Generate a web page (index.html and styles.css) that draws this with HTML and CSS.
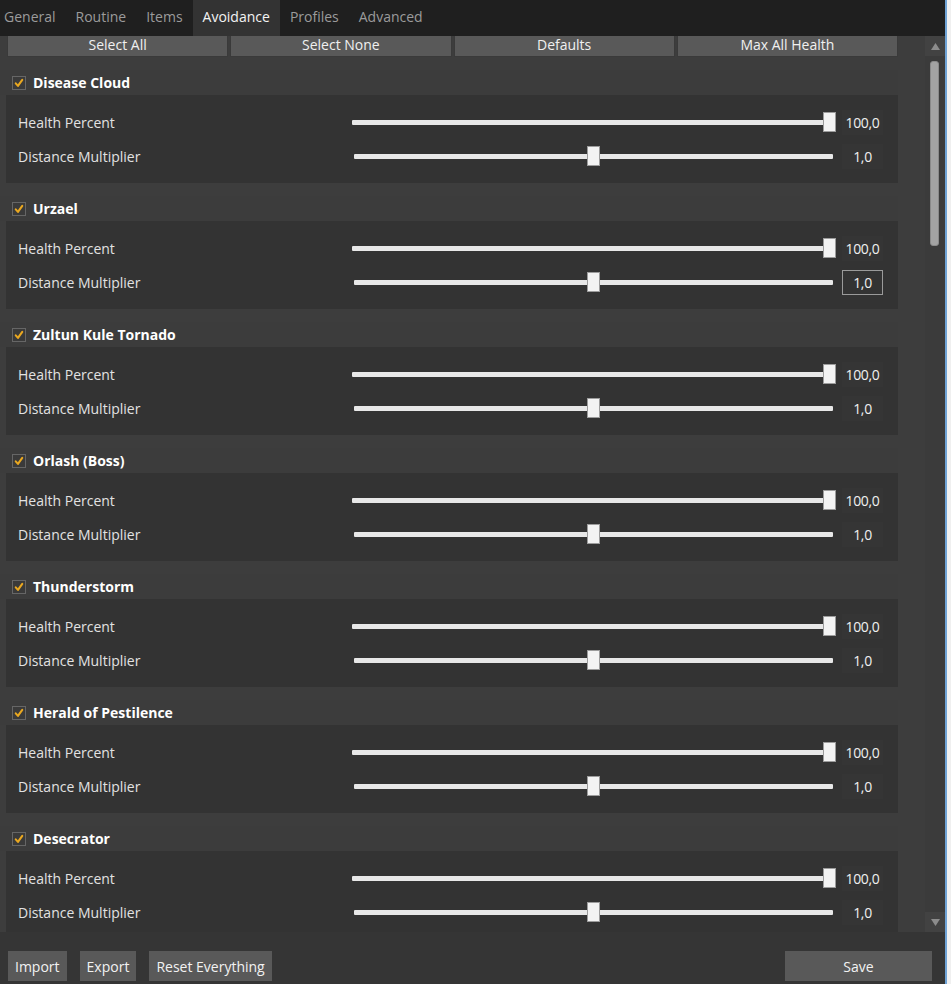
FILE: index.html
```html
<!DOCTYPE html>
<html>
<head>
<meta charset="utf-8">
<link rel="stylesheet" href="styles.css">
</head>
<body>
<div class="window">
  <nav class="tabs">
    <div class="tab">General</div>
    <div class="tab">Routine</div>
    <div class="tab">Items</div>
    <div class="tab active">Avoidance</div>
    <div class="tab">Profiles</div>
    <div class="tab">Advanced</div>
  </nav>
  <div class="main">
    <div class="content">
      <div class="toolbar">
        <button class="tbtn">Select All</button>
        <button class="tbtn">Select None</button>
        <button class="tbtn">Defaults</button>
        <button class="tbtn">Max All Health</button>
      </div>

      <section class="group">
        <div class="ghead"><span class="cb"><svg viewBox="0 0 14 14"><path d="M3.2 7.4 L5.8 10.4 L10.8 3.4" /></svg></span><span class="gtitle">Disease Cloud</span></div>
        <div class="gbody">
          <div class="row"><span class="label">Health Percent</span><div class="slider s-h"><div class="track"></div><div class="thumb" style="left:477px"></div></div><span class="val">100,0</span></div>
          <div class="row"><span class="label">Distance Multiplier</span><div class="slider s-d"><div class="track"></div><div class="thumb" style="left:241px"></div></div><span class="val">1,0</span></div>
        </div>
      </section>

      <section class="group">
        <div class="ghead"><span class="cb"><svg viewBox="0 0 14 14"><path d="M3.2 7.4 L5.8 10.4 L10.8 3.4" /></svg></span><span class="gtitle">Urzael</span></div>
        <div class="gbody">
          <div class="row"><span class="label">Health Percent</span><div class="slider s-h"><div class="track"></div><div class="thumb" style="left:477px"></div></div><span class="val">100,0</span></div>
          <div class="row"><span class="label">Distance Multiplier</span><div class="slider s-d"><div class="track"></div><div class="thumb" style="left:241px"></div></div><span class="val focus">1,0</span></div>
        </div>
      </section>

      <section class="group">
        <div class="ghead"><span class="cb"><svg viewBox="0 0 14 14"><path d="M3.2 7.4 L5.8 10.4 L10.8 3.4" /></svg></span><span class="gtitle">Zultun Kule Tornado</span></div>
        <div class="gbody">
          <div class="row"><span class="label">Health Percent</span><div class="slider s-h"><div class="track"></div><div class="thumb" style="left:477px"></div></div><span class="val">100,0</span></div>
          <div class="row"><span class="label">Distance Multiplier</span><div class="slider s-d"><div class="track"></div><div class="thumb" style="left:241px"></div></div><span class="val">1,0</span></div>
        </div>
      </section>

      <section class="group">
        <div class="ghead"><span class="cb"><svg viewBox="0 0 14 14"><path d="M3.2 7.4 L5.8 10.4 L10.8 3.4" /></svg></span><span class="gtitle">Orlash (Boss)</span></div>
        <div class="gbody">
          <div class="row"><span class="label">Health Percent</span><div class="slider s-h"><div class="track"></div><div class="thumb" style="left:477px"></div></div><span class="val">100,0</span></div>
          <div class="row"><span class="label">Distance Multiplier</span><div class="slider s-d"><div class="track"></div><div class="thumb" style="left:241px"></div></div><span class="val">1,0</span></div>
        </div>
      </section>

      <section class="group">
        <div class="ghead"><span class="cb"><svg viewBox="0 0 14 14"><path d="M3.2 7.4 L5.8 10.4 L10.8 3.4" /></svg></span><span class="gtitle">Thunderstorm</span></div>
        <div class="gbody">
          <div class="row"><span class="label">Health Percent</span><div class="slider s-h"><div class="track"></div><div class="thumb" style="left:477px"></div></div><span class="val">100,0</span></div>
          <div class="row"><span class="label">Distance Multiplier</span><div class="slider s-d"><div class="track"></div><div class="thumb" style="left:241px"></div></div><span class="val">1,0</span></div>
        </div>
      </section>

      <section class="group">
        <div class="ghead"><span class="cb"><svg viewBox="0 0 14 14"><path d="M3.2 7.4 L5.8 10.4 L10.8 3.4" /></svg></span><span class="gtitle">Herald of Pestilence</span></div>
        <div class="gbody">
          <div class="row"><span class="label">Health Percent</span><div class="slider s-h"><div class="track"></div><div class="thumb" style="left:477px"></div></div><span class="val">100,0</span></div>
          <div class="row"><span class="label">Distance Multiplier</span><div class="slider s-d"><div class="track"></div><div class="thumb" style="left:241px"></div></div><span class="val">1,0</span></div>
        </div>
      </section>

      <section class="group">
        <div class="ghead"><span class="cb"><svg viewBox="0 0 14 14"><path d="M3.2 7.4 L5.8 10.4 L10.8 3.4" /></svg></span><span class="gtitle">Desecrator</span></div>
        <div class="gbody">
          <div class="row"><span class="label">Health Percent</span><div class="slider s-h"><div class="track"></div><div class="thumb" style="left:477px"></div></div><span class="val">100,0</span></div>
          <div class="row"><span class="label">Distance Multiplier</span><div class="slider s-d"><div class="track"></div><div class="thumb" style="left:241px"></div></div><span class="val">1,0</span></div>
        </div>
      </section>
    </div>
    <div class="scrollbar">
      <div class="sarrow"><svg viewBox="0 0 12 10"><path d="M1 9 L6 1 L11 9 Z"/></svg></div>
      <div class="strack"><div class="sthumb"></div></div>
      <div class="sarrow"><svg viewBox="0 0 12 10"><path d="M1 1 L11 1 L6 9 Z"/></svg></div>
    </div>
  </div>
  <footer class="bottom">
    <button class="bbtn">Import</button>
    <button class="bbtn">Export</button>
    <button class="bbtn">Reset Everything</button>
    <button class="bbtn save">Save</button>
  </footer>
</div>
</body>
</html>
```

FILE: styles.css
```css
* { box-sizing: border-box; }
html, body {
  margin: 0;
  padding: 0;
  background: #f0f0f0;
  width: 951px;
  height: 984px;
  overflow: hidden;
  font-family: "Open Sans", "Noto Sans", sans-serif;
  font-size: 14px;
}
.window {
  width: 947px;
  height: 984px;
  background: #3b3b3b;
  border-right: 2px solid #6fa3d6;
  display: flex;
  flex-direction: column;
}
.tabs {
  height: 36px;
  flex: none;
  background: #1f1f1f;
  display: flex;
  margin-left: -6px;
}
.tab {
  padding: 0 10px;
  line-height: 34px;
  color: #9b9b9b;
  font-size: 14px;
}
.tab.active {
  background: #333333;
  color: #f4f4f4;
}
.main {
  height: 896px;
  flex: none;
  display: flex;
  overflow: hidden;
}
.content {
  width: 925px;
  padding: 0 27px 0 6px;
  overflow: hidden;
  background: #3d3d3d;
}
.toolbar {
  display: grid;
  grid-template-columns: repeat(4, 1fr);
  column-gap: 2px;
  margin: 0 0 0 1px;
  height: 21px;
}
.tbtn {
  font: inherit;
  font-size: 14px;
  color: #f0f0f0;
  background: #595959;
  border: 1px solid #3a3a3a;
  border-top: none;
  padding: 0 0 2px 0;
  line-height: 18px;
  height: 21px;
}
.group {
  margin-top: 13px;
}
.ghead {
  height: 25px;
  display: flex;
  align-items: center;
  background: #3c3c3c;
  margin-left: -6px;
  padding-left: 12px;
}
.cb {
  width: 14px;
  height: 14px;
  border: 1px solid #666666;
  background: #3a3a3a;
  display: inline-block;
  margin-right: 7px;
}
.cb svg {
  width: 12px;
  height: 12px;
  display: block;
}
.cb path {
  fill: none;
  stroke: #eaa820;
  stroke-width: 2.4;
  stroke-linecap: round;
  stroke-linejoin: round;
}
.gtitle {
  color: #ffffff;
  font-weight: 700;
  font-size: 14px;
}
.gbody {
  background: #333333;
  padding: 10px 15px 10px 12px;
  height: 88px;
}
.row {
  height: 34px;
  display: flex;
  align-items: center;
}
.label {
  width: 328px;
  color: #e2e2e2;
  font-size: 14px;
}
.slider {
  position: relative;
  width: 494px;
  height: 20px;
  display: flex;
  align-items: center;
}
.s-h { padding: 0 10px 0 6px; }
.s-d { padding: 0 7px 0 8px; }
.track {
  flex: 1;
  height: 5px;
  background: #e8e8e8;
  border-radius: 1px;
}
.thumb {
  position: absolute;
  top: 0;
  width: 13px;
  height: 20px;
  background: #f3f3f3;
  border: 1px solid #9c9c9c;
}
.val {
  margin-left: 2px;
  width: 41px;
  height: 25px;
  line-height: 23px;
  text-align: center;
  color: #f0f0f0;
  font-size: 14px;
  background: #353535;
  border: 1px solid transparent;
  letter-spacing: -0.3px;
}
.val.focus {
  border-color: #9a9a9a;
  background: #333333;
}
.scrollbar {
  width: 20px;
  display: flex;
  flex-direction: column;
  background: #3b3b3b;
}
.sarrow {
  height: 20px;
  flex: none;
  display: flex;
  align-items: center;
  justify-content: center;
  background: #424242;
}
.sarrow svg {
  width: 11px;
  height: 9px;
}
.sarrow path { fill: #8c8c8c; }
.strack {
  flex: 1;
  padding: 5px 0 0 5px;
}
.sthumb {
  width: 9px;
  height: 185px;
  background: #a3a3a3;
  border-radius: 3px;
  border: 1px solid #8a8a8a;
}
.bottom {
  flex: 1;
  background: #353535;
  display: flex;
  align-items: flex-start;
  padding: 19px 13px 0 8px;
  gap: 13px;
}
.bbtn {
  font: inherit;
  font-size: 14px;
  color: #f2f2f2;
  background: #595959;
  border: none;
  height: 30px;
  padding: 0 7px;
}
.bbtn.save {
  margin-left: auto;
  width: 147px;
}
```
